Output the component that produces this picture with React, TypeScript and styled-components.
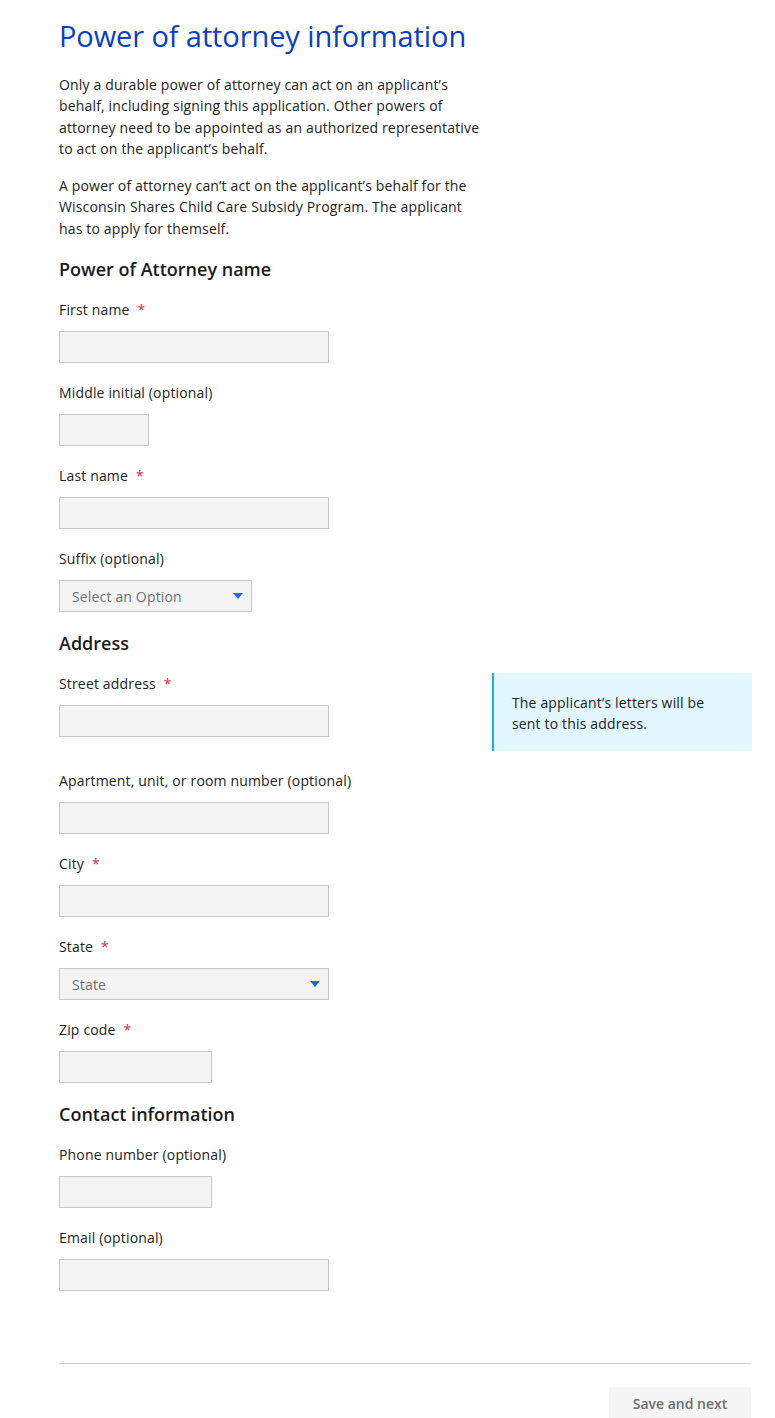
import React from "react";
import styled, { createGlobalStyle } from "styled-components";

const GlobalStyle = createGlobalStyle`
  html, body { margin: 0; padding: 0; background: #ffffff; }
  body {
    font-family: "Open Sans", "Noto Sans", "DejaVu Sans", sans-serif;
    color: #222222;
    font-size: 14px;
  }
  * { box-sizing: border-box; }
`;

const Page = styled.main`
  width: 693px;
  margin-left: 59px;
  padding-top: 16px;
`;

const Title = styled.h1`
  margin: 0 0 18px;
  font-size: 29px;
  line-height: 40px;
  font-weight: 400;
  color: #0b3fc0;
  letter-spacing: -0.1px;
`;

const Intro = styled.p`
  max-width: 426px;
  margin: 0 0 16px;
  font-size: 14px;
  line-height: 21.3px;
  letter-spacing: 0.16px;
  color: #222222;
  &:last-of-type { margin-bottom: 0; }
`;

const Section = styled.section`
  margin-top: 18px;
  &:first-of-type { margin-top: 17px; }
`;

const SectionHeading = styled.h2`
  margin: 0 0 16px;
  font-size: 18px;
  line-height: 27px;
  font-weight: 600;
  color: #1b1b1b;
`;

const Stack = styled.div`
  display: flex;
  flex-direction: column;
  gap: 19px;
`;

const FieldWrap = styled.div`
  display: flex;
  flex-direction: column;
  gap: 11px;
`;

const Label = styled.label`
  font-size: 14px;
  line-height: 21px;
  letter-spacing: 0.16px;
  color: #222222;
`;

const Required = styled.span`
  color: #e0283f;
  margin-left: 8px;
`;

const TextInput = styled.input<{ $w: number }>`
  width: ${(p) => p.$w}px;
  height: 32px;
  margin: 0;
  padding: 0 12px;
  background: #f4f4f4;
  border: 1px solid #c8c8c8;
  border-radius: 0;
  font-family: inherit;
  font-size: 14px;
  color: #222;
  outline: none;
`;

const SelectBox = styled.div<{ $w: number }>`
  position: relative;
  width: ${(p) => p.$w}px;
  height: 32px;
`;

const NativeSelect = styled.select`
  appearance: none;
  -webkit-appearance: none;
  width: 100%;
  height: 100%;
  margin: 0;
  padding: 0 30px 0 12px;
  background: #f4f4f4;
  border: 1px solid #c8c8c8;
  border-radius: 0;
  font-family: inherit;
  font-size: 14px;
  letter-spacing: 0.16px;
  color: #6f6f6f;
  outline: none;
`;

const Caret = styled.svg`
  position: absolute;
  right: 9px;
  top: 13px;
  pointer-events: none;
`;

const AddressRow = styled.div`
  display: grid;
  grid-template-columns: 1fr 260px;
  align-items: start;
`;

const InfoBox = styled.aside`
  padding: 19px 22px 17px 18px;
  background: #e1f7fd;
  border-left: 2px solid #13b5e6;
  font-size: 14px;
  line-height: 21px;
  letter-spacing: 0.16px;
  color: #222222;
`;

const Divider = styled.hr`
  margin: 72px 0 0;
  width: 692px;
  border: 0;
  border-top: 1px solid #cccccc;
`;

const Actions = styled.div`
  display: flex;
  justify-content: flex-end;
  width: 692px;
  margin-top: 23px;
`;

const PrimaryButton = styled.button`
  width: 142px;
  height: 32px;
  border: 0;
  border-radius: 0;
  background: #f5f5f5;
  color: #6d6d6d;
  font-family: inherit;
  font-size: 14px;
  font-weight: 600;
  cursor: pointer;
`;

type FieldProps = { id: string; label: string; required?: boolean; width: number };

const Field = ({ id, label, required, width }: FieldProps) => (
  <FieldWrap>
    <Label htmlFor={id}>
      {label}
      {required && <Required>*</Required>}
    </Label>
    <TextInput id={id} $w={width} />
  </FieldWrap>
);

const SelectField = ({ id, label, required, width, placeholder }: FieldProps & { placeholder: string }) => (
  <FieldWrap>
    <Label htmlFor={id}>
      {label}
      {required && <Required>*</Required>}
    </Label>
    <SelectBox $w={width}>
      <NativeSelect id={id} defaultValue="">
        <option value="">{placeholder}</option>
      </NativeSelect>
      <Caret width="10" height="6" viewBox="0 0 10 6" aria-hidden="true">
        <polygon points="0,0 10,0 5,6" fill="#1a6ae8" />
      </Caret>
    </SelectBox>
  </FieldWrap>
);

export default function App() {
  return (
    <>
      <GlobalStyle />
      <Page>
        <Title>Power of attorney information</Title>
        <Intro>
          Only a durable power of attorney can act on an applicant’s behalf, including signing this
          application. Other powers of attorney need to be appointed as an authorized representative
          to act on the applicant’s behalf.
        </Intro>
        <Intro>
          A power of attorney can’t act on the applicant’s behalf for the Wisconsin Shares Child Care
          Subsidy Program. The applicant has to apply for themself.
        </Intro>

        <Section>
          <SectionHeading>Power of Attorney name</SectionHeading>
          <Stack>
            <Field id="first" label="First name" required width={270} />
            <Field id="middle" label="Middle initial (optional)" width={90} />
            <Field id="last" label="Last name" required width={270} />
            <SelectField id="suffix" label="Suffix (optional)" width={193} placeholder="Select an Option" />
          </Stack>
        </Section>

        <Section>
          <SectionHeading>Address</SectionHeading>
          <Stack>
            <AddressRow>
              <Field id="street" label="Street address" required width={270} />
              <InfoBox>The applicant’s letters will be sent to this address.</InfoBox>
            </AddressRow>
            <Field id="apt" label="Apartment, unit, or room number (optional)" width={270} />
            <Field id="city" label="City" required width={270} />
            <SelectField id="state" label="State" required width={270} placeholder="State" />
            <Field id="zip" label="Zip code" required width={153} />
          </Stack>
        </Section>

        <Section>
          <SectionHeading>Contact information</SectionHeading>
          <Stack>
            <Field id="phone" label="Phone number (optional)" width={153} />
            <Field id="email" label="Email (optional)" width={270} />
          </Stack>
        </Section>

        <Divider />
        <Actions>
          <PrimaryButton type="button">Save and next</PrimaryButton>
        </Actions>
      </Page>
    </>
  );
}
